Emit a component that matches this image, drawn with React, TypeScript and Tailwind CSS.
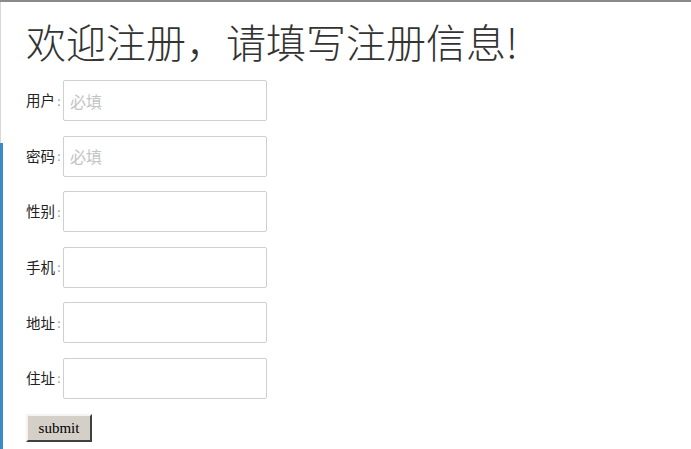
const fields = [
  { label: '用户', placeholder: '必填' },
  { label: '密码', placeholder: '必填' },
  { label: '性别', placeholder: '' },
  { label: '手机', placeholder: '' },
  { label: '地址', placeholder: '' },
  { label: '住址', placeholder: '' },
];

export default function App() {
  return (
    <div className="flex h-[449px] w-[691px] overflow-hidden border-t-2 border-[#8a8a8a] bg-white font-['Noto_Sans_CJK_SC',sans-serif] text-[#222]">
      {/* left edge of the window */}
      <div className="flex w-[3px] flex-col">
        <div className="h-[141px] w-px bg-[#d8d8d8]" />
        <div className="flex-1 bg-[#3d8ac8]" />
      </div>

      <div className="flex flex-1 flex-col pl-[23px]">
        <h1 className="mt-[15px] text-[40px] font-light leading-[48px] text-[#333]">
          欢迎注册，请填写注册信息!
        </h1>

        <form className="mt-[15px] flex flex-col gap-[14.6px]">
          {fields.map(f => (
            <div key={f.label} className="flex items-center">
              <span className="w-[29px] text-[14.5px] leading-none">{f.label}</span>
              <span className="w-[8px] text-center text-[12px] leading-none text-[#999]">:</span>
              <input
                type="text"
                placeholder={f.placeholder}
                className="h-[41px] w-[204px] rounded-[2px] border border-[#cfcfcf] px-[6px] text-[16px] outline-none placeholder:text-[#c4c4c4]"
              />
            </div>
          ))}
          <div>
            <button
              type="button"
              className="mt-[-2px] h-[28px] w-[66px] border-2 border-t-[#f4f3ef] border-l-[#f4f3ef] border-r-[#404040] border-b-[#404040] bg-[#d4d0c8] font-['Liberation_Serif',serif] text-[15px] text-black"
            >
              submit
            </button>
          </div>
        </form>
      </div>
    </div>
  );
}
